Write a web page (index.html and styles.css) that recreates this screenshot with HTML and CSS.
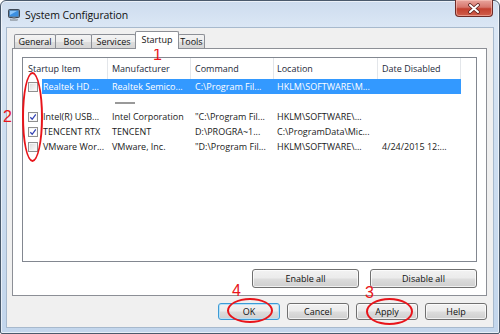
FILE: index.html
```html
<!DOCTYPE html>
<html lang="en">
<head>
    <meta charset="UTF-8">
    <meta name="viewport" content="width=device-width, initial-scale=1.0">
    <title>System Configuration</title>
    <link rel="stylesheet" href="styles.css">
</head>

<body>
    <div class="screen">
        <div class="window">
            <div class="titlebar">
                <svg class="app-icon" width="12" height="13" viewBox="0 0 12 13">
                    <rect x="0.5" y="1.5" width="11" height="8" rx="1" fill="#6d7a88" stroke="#3f4956"/>
                    <rect x="1.5" y="2.5" width="9" height="6" fill="#3b8fe0"/>
                    <path d="M2 3 L9 3 L2 7 Z" fill="#8cc6fa"/>
                    <rect x="4.5" y="9.5" width="3" height="1.5" fill="#9aa3ad"/>
                    <rect x="2.5" y="11" width="7" height="1.5" fill="#b9c0c8" stroke="#7e8792" stroke-width="0.5"/>
                </svg>
                <span class="title">System Configuration</span>
                <div class="close-btn">
                    <svg width="14" height="11" viewBox="0 0 14 11">
                        <path d="M3 2 L11 9 M11 2 L3 9" stroke="#5a2220" stroke-width="3.6" stroke-linecap="round"/>
                        <path d="M3 2 L11 9 M11 2 L3 9" stroke="#ffffff" stroke-width="2" stroke-linecap="round"/>
                    </svg>
                </div>
            </div>

            <div class="client">
                <!-- вкладки -->
                <div class="tabs">
                    <div class="tab tab-general">General</div>
                    <div class="tab tab-boot">Boot</div>
                    <div class="tab tab-services">Services</div>
                    <div class="tab tab-startup active">Startup</div>
                    <div class="tab tab-tools">Tools</div>
                </div>

                <div class="panel">
                    <div class="list">
                        <div class="list-head">
                            <div class="col c1">Startup Item</div>
                            <div class="col c2">Manufacturer</div>
                            <div class="col c3">Command</div>
                            <div class="col c4">Location</div>
                            <div class="col c5">Date Disabled</div>
                        </div>

                        <div class="row selected">
                            <div class="check-cell"><span class="checkbox"></span></div>
                            <div class="cells">
                                <div class="cell c1">Realtek HD ...</div>
                                <div class="cell c2">Realtek Semico...</div>
                                <div class="cell c3">C:\Program Fil...</div>
                                <div class="cell c4">HKLM\SOFTWARE\M...</div>
                                <div class="cell c5"></div>
                            </div>
                        </div>

                        <div class="row blank">
                            <div class="check-cell"></div>
                            <div class="cells">
                                <div class="cell c1"></div>
                                <div class="cell c2"><span class="smudge"></span></div>
                            </div>
                        </div>

                        <div class="row">
                            <div class="check-cell"><span class="checkbox checked"></span></div>
                            <div class="cells">
                                <div class="cell c1">Intel(R) USB...</div>
                                <div class="cell c2">Intel Corporation</div>
                                <div class="cell c3">"C:\Program Fil...</div>
                                <div class="cell c4">HKLM\SOFTWARE\...</div>
                                <div class="cell c5"></div>
                            </div>
                        </div>

                        <div class="row">
                            <div class="check-cell"><span class="checkbox checked"></span></div>
                            <div class="cells">
                                <div class="cell c1">TENCENT RTX</div>
                                <div class="cell c2">TENCENT</div>
                                <div class="cell c3">D:\PROGRA~1...</div>
                                <div class="cell c4">C:\ProgramData\Mic...</div>
                                <div class="cell c5"></div>
                            </div>
                        </div>

                        <div class="row">
                            <div class="check-cell"><span class="checkbox"></span></div>
                            <div class="cells">
                                <div class="cell c1">VMware Wor...</div>
                                <div class="cell c2">VMware, Inc.</div>
                                <div class="cell c3">"D:\Program Fil...</div>
                                <div class="cell c4">HKLM\SOFTWARE\...</div>
                                <div class="cell c5">4/24/2015 12:...</div>
                            </div>
                        </div>
                    </div>

                    <div class="panel-buttons">
                        <button class="btn btn-wide">Enable all</button>
                        <button class="btn btn-wide">Disable all</button>
                    </div>
                </div>

                <div class="dialog-buttons">
                    <button class="btn default">OK</button>
                    <button class="btn">Cancel</button>
                    <button class="btn">Apply</button>
                    <button class="btn">Help</button>
                </div>
            </div>
        </div>

        <!-- красные пометки поверх окна -->
        <span class="mark mark-1">1</span>
        <span class="mark mark-2">2</span>
        <span class="mark mark-3">3</span>
        <span class="mark mark-4">4</span>
        <div class="oval oval-checks"></div>
        <div class="oval oval-ok"></div>
        <div class="oval oval-apply"></div>
    </div>
</body>
</html>
```

FILE: styles.css
```css
* {
    box-sizing: border-box;
}

body {
    margin: 0;
    background-color: #fff;
    font-family: "Open Sans", "Liberation Sans", sans-serif;
    font-size: 9px;
    color: #1a1a1a;
}

.screen {
    position: relative;
    width: 500px;
    height: 334px;
    overflow: hidden;
}

.window {
    width: 500px;
    height: 334px;
    display: flex;
    flex-direction: column;
    padding: 0 6px 6px;
    border: 1px solid #4a5a6c;
    border-radius: 6px 6px 2px 2px;
    background: linear-gradient(180deg, #cddcee 0%, #dbe7f5 8%, #cfdff1 40%, #c3d6ec 100%);
    box-shadow: inset 0 0 0 1px rgba(255, 255, 255, 0.6);
}

.titlebar {
    height: 27px;
    display: flex;
    align-items: center;
    flex-shrink: 0;
}

.app-icon {
    margin: 0 5px 0 1px;
}

.title {
    font-size: 10.5px;
    color: #111;
    letter-spacing: -0.1px;
}

.close-btn {
    margin-left: auto;
    align-self: flex-start;
    margin-top: -1px;
    width: 38px;
    height: 17px;
    display: flex;
    align-items: center;
    justify-content: center;
    border: 1px solid #6e2b27;
    border-top: none;
    border-radius: 0 0 4px 4px;
    background: linear-gradient(180deg, #e9a59d 0%, #d7766c 45%, #c3402f 55%, #cf5f4c 100%);
    box-shadow: inset 0 0 0 1px rgba(255, 210, 200, 0.5);
}

.client {
    flex: 1;
    display: flex;
    flex-direction: column;
    padding: 0 6px 0 5px;
    background-color: #f0f0f0;
    box-shadow: 0 0 0 1px #a7b9cd;
}

/* вкладки */
.tabs {
    height: 20px;
    display: flex;
    align-items: flex-end;
    padding-left: 2px;
    flex-shrink: 0;
}

.tab {
    height: 14px;
    margin-right: -1px;
    border: 1px solid #8c8f96;
    border-bottom: none;
    border-radius: 2px 2px 0 0;
    background: linear-gradient(180deg, #f4f4f4 0%, #ececec 50%, #dedede 51%, #d6d6d6 100%);
    text-align: center;
    line-height: 13px;
    color: #111;
}

.tab.active {
    position: relative;
    z-index: 1;
    height: 18px;
    margin-bottom: -1px;
    background: #fff;
    line-height: 16px;
}

.tab-general { width: 42px; }
.tab-boot { width: 37px; }
.tab-services { width: 45px; }
.tab-startup { width: 44px; }
.tab-tools { width: 27px; }

.panel {
    height: 248px;
    flex-shrink: 0;
    display: flex;
    flex-direction: column;
    padding: 8px 9px 7px;
    border: 1px solid #8c8f96;
    background-color: #fff;
}

.list {
    height: 205px;
    flex-shrink: 0;
    border: 1px solid #828790;
    background-color: #fff;
}

.list-head {
    height: 21px;
    display: flex;
}

.col {
    height: 21px;
    line-height: 22px;
    padding-left: 4px;
    border-right: 1px solid #e3e6ea;
    color: #1e2a3a;
    white-space: nowrap;
    overflow: hidden;
}

.list-head .c1 { width: 85px; padding-left: 5px; }
.list-head .c2 { width: 83px; }
.list-head .c3 { width: 83px; }
.list-head .c4 { width: 104px; padding-left: 3px; }
.list-head .c5 { width: 83px; }

.row {
    height: 15px;
    display: flex;
}

.check-cell {
    width: 19px;
    padding-left: 5px;
    display: flex;
    align-items: center;
}

.checkbox {
    width: 10px;
    height: 10px;
    border: 1px solid #8f8f8f;
    background: linear-gradient(135deg, #d8d8d8 0%, #f4f4f4 70%, #ffffff 100%);
    box-shadow: inset 0 0 0 1px #f6f6f6;
}

.checkbox.checked {
    background: #fff url("data:image/svg+xml;utf8,<svg xmlns='http://www.w3.org/2000/svg' width='8' height='8'><path d='M1.3 4.3 L3.2 6.3 L6.8 1.4' fill='none' stroke='%233545b5' stroke-width='1.3'/></svg>") center no-repeat;
}

.cells {
    display: flex;
    height: 15px;
}

.cell {
    line-height: 15px;
    padding-left: 4px;
    white-space: nowrap;
    overflow: hidden;
}

.cells .c1 { width: 66px; padding-left: 1px; }
.cells .c2 { width: 83px; }
.cells .c3 { width: 83px; }
.cells .c4 { width: 104px; padding-left: 3px; }
.cells .c5 { width: 83px; }

.row.selected .cells {
    background-color: #3399ff;
    color: #fff;
}

.smudge {
    display: inline-block;
    width: 20px;
    height: 2px;
    margin-left: 3px;
    vertical-align: middle;
    background-color: #555;
    opacity: 0.6;
}

.panel-buttons {
    display: flex;
    justify-content: flex-end;
    gap: 11px;
    margin-top: 7px;
}

.btn {
    height: 17px;
    width: 62px;
    padding: 0;
    border: 1px solid #707070;
    border-radius: 3px;
    background: linear-gradient(180deg, #f2f2f2 0%, #ebebeb 48%, #dddddd 52%, #cfcfcf 100%);
    box-shadow: inset 0 0 0 1px rgba(255, 255, 255, 0.7);
    font-family: "Open Sans", "Liberation Sans", sans-serif;
    font-size: 9px;
    color: #111;
}

.btn-wide {
    width: 107px;
    height: 19px;
}

.btn.default {
    border-color: #3c9bd6;
    box-shadow: inset 0 0 0 1px #b7e1f7;
}

.dialog-buttons {
    display: flex;
    justify-content: flex-end;
    gap: 7px;
    margin-top: 7px;
}

/* пометки */
.mark {
    position: absolute;
    font-family: "Liberation Sans", sans-serif;
    font-size: 16px;
    line-height: 16px;
    color: #e8141a;
}

.mark-1 { left: 153px; top: 47px; }
.mark-2 { left: 3px; top: 109px; }
.mark-3 { left: 365px; top: 285px; }
.mark-4 { left: 232px; top: 283px; }

.oval {
    position: absolute;
    border: 2px solid #e8141a;
    border-radius: 50%;
}

.oval-checks { left: 22px; top: 72px; width: 21px; height: 90px; }
.oval-ok { left: 227px; top: 298px; width: 46px; height: 25px; }
.oval-apply { left: 366px; top: 298px; width: 47px; height: 27px; }
```
